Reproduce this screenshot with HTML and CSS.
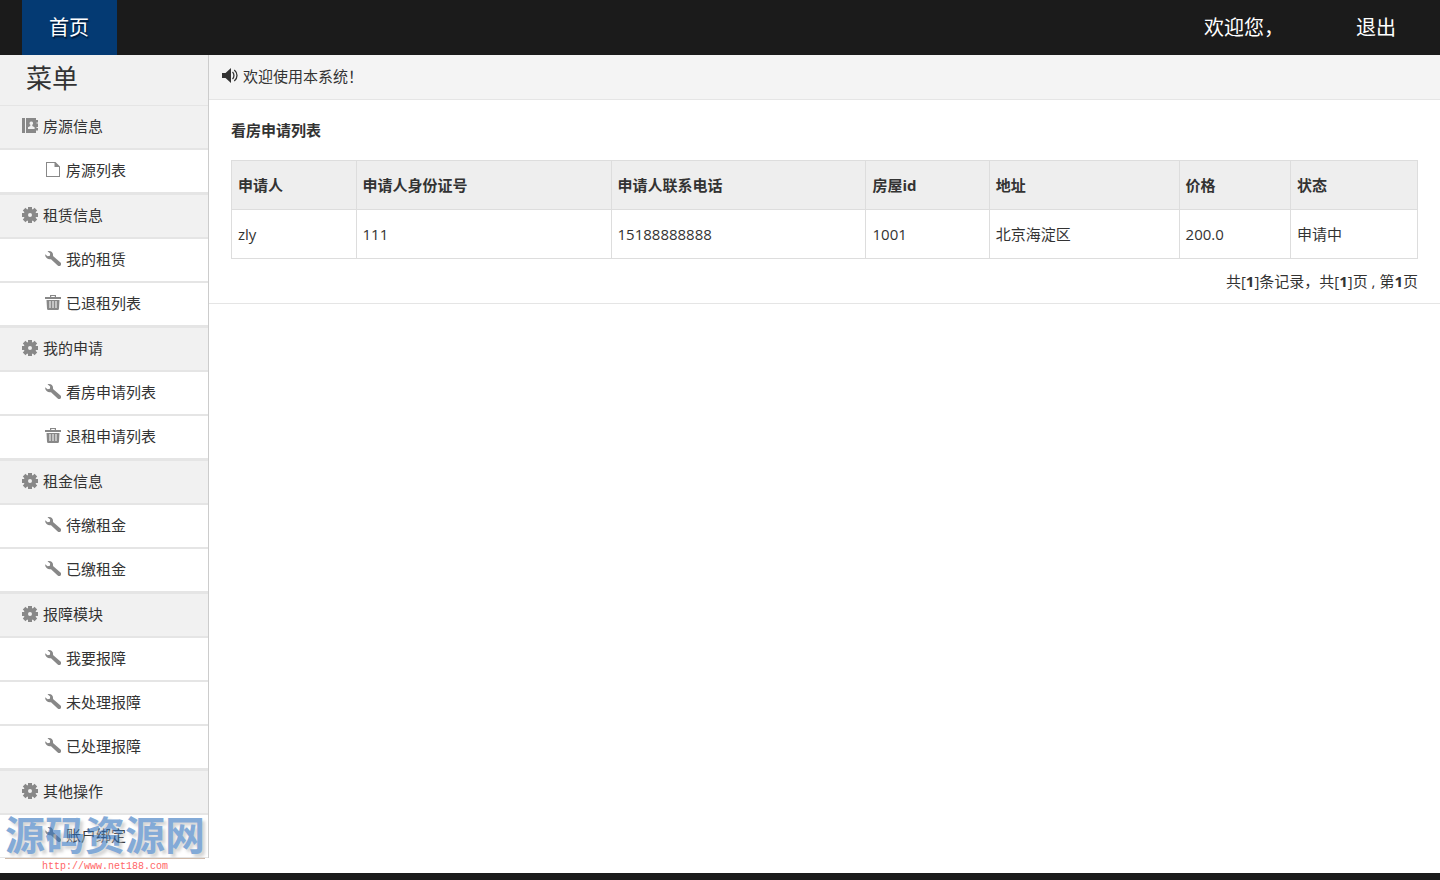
FILE: index.html
```html
<!DOCTYPE html>
<html lang="zh-CN">
<head>
<meta charset="utf-8">
<title>看房申请列表</title>
<link rel="stylesheet" href="styles.css">
</head>
<body>
<svg class="sprite" aria-hidden="true">
  <symbol id="i-gear" viewBox="0 0 16 16"><path fill-rule="evenodd" d="M6 0h4v2l.8.400L12.500.800l2.700 2.700-1.600 1.700.4.800h2v4h-2l-.4.800 1.600 1.700-2.700 2.700-1.700-1.600-.8.400v2H6v-2l-.8-.4-1.700 1.600L.8 12.500l1.600-1.700L2 10H0V6h2l.4-.8L.8 3.500 3.500.8l1.700 1.600L6 2zM8 6a2 2 0 1 0 0 4 2 2 0 0 0 0-4z"/></symbol>
  <symbol id="i-book" viewBox="0 0 16 16"><path fill-rule="evenodd" d="M0 0h3v15H0zM4 0h10v2h2v2.500h-1.500v1H16V9h-1.500v1H16v2.500h-2V15H4zM9.300 3.500A1.800 1.800 0 0 0 8.300 6.800v1.200L6 9.300V11h6.600V9.300L10.300 8V6.800a1.800 1.800 0 0 0-1-3.300z"/></symbol>
  <symbol id="i-file" viewBox="0 0 16 16"><path fill-rule="evenodd" d="M1 0h9.500L15 4.500V15H1zM2 1v13h12V5H9.500V1z"/></symbol>
  <symbol id="i-wrench" viewBox="0 0 16 16"><path d="M2.500.3C5.500-.7 8.600 1.300 8 5l7.500 6.500c1 1 .8 2.100.1 2.900-.7.800-2 .9-2.900 0L6 8.200C3.400 8.900.2 7.200 0 3.300l2.700 2 2.200-.5.300-2.200z"/></symbol>
  <symbol id="i-trash" viewBox="0 0 16 16"><path fill-rule="evenodd" d="M5 0h6v2h5v2H0V2h5zm1.200 1v1h3.600V1zM1.500 5h13l-.5 8.500c-.1 1-.7 1.500-1.500 1.500h-9c-.8 0-1.400-.5-1.500-1.500zM4.500 6v7h1V6zm3 0v7h1V6zm3 0v7h1V6z"/></symbol>
  <symbol id="i-sound" viewBox="0 0 16 16"><path d="M0 5h3.500L9 0v15L3.500 10H0z"/><path d="M10.500 4c1.900 1.800 1.900 5.200 0 7M12.300 2c3.600 3 3.600 8 0 11" fill="none" stroke="currentColor" stroke-width="1.300"/></symbol>
</svg>
<header class="topbar">
  <a class="home" href="#">首页</a>
  <div class="user"><span>欢迎您，</span><a href="#">退出</a></div>
</header>
<div class="layout">
  <nav class="sidebar">
    <h1 class="menu-title">菜单</h1>
    <section class="group">
      <a class="row head" href="#"><svg class="icon"><use href="#i-book"/></svg>房源信息</a>
      <a class="row item" href="#"><svg class="icon"><use href="#i-file"/></svg>房源列表</a>
    </section>
    <section class="group">
      <a class="row head" href="#"><svg class="icon"><use href="#i-gear"/></svg>租赁信息</a>
      <a class="row item" href="#"><svg class="icon"><use href="#i-wrench"/></svg>我的租赁</a>
      <a class="row item" href="#"><svg class="icon"><use href="#i-trash"/></svg>已退租列表</a>
    </section>
    <section class="group">
      <a class="row head" href="#"><svg class="icon"><use href="#i-gear"/></svg>我的申请</a>
      <a class="row item" href="#"><svg class="icon"><use href="#i-wrench"/></svg>看房申请列表</a>
      <a class="row item" href="#"><svg class="icon"><use href="#i-trash"/></svg>退租申请列表</a>
    </section>
    <section class="group">
      <a class="row head" href="#"><svg class="icon"><use href="#i-gear"/></svg>租金信息</a>
      <a class="row item" href="#"><svg class="icon"><use href="#i-wrench"/></svg>待缴租金</a>
      <a class="row item" href="#"><svg class="icon"><use href="#i-wrench"/></svg>已缴租金</a>
    </section>
    <section class="group">
      <a class="row head" href="#"><svg class="icon"><use href="#i-gear"/></svg>报障模块</a>
      <a class="row item" href="#"><svg class="icon"><use href="#i-wrench"/></svg>我要报障</a>
      <a class="row item" href="#"><svg class="icon"><use href="#i-wrench"/></svg>未处理报障</a>
      <a class="row item" href="#"><svg class="icon"><use href="#i-wrench"/></svg>已处理报障</a>
    </section>
    <section class="group">
      <a class="row head" href="#"><svg class="icon"><use href="#i-gear"/></svg>其他操作</a>
      <a class="row item" href="#"><svg class="icon"><use href="#i-wrench"/></svg>账户绑定</a>
    </section>
  </nav>
  <main class="main">
    <p class="notice"><svg class="icon"><use href="#i-sound"/></svg>欢迎使用本系统！</p>
    <div class="content">
      <h2 class="title">看房申请列表</h2>
      <table class="list">
        <colgroup><col class="c-name"><col class="c-wide"><col class="c-wide"><col class="c-house"><col class="c-addr"><col class="c-price"><col class="c-state"></colgroup>
        <thead><tr><th>申请人</th><th>申请人身份证号</th><th>申请人联系电话</th><th>房屋id</th><th>地址</th><th>价格</th><th>状态</th></tr></thead>
        <tbody><tr><td>zly</td><td>111</td><td>15188888888</td><td>1001</td><td>北京海淀区</td><td>200.0</td><td>申请中</td></tr></tbody>
      </table>
      <p class="pager">共[<b>1</b>]条记录，共[<b>1</b>]页 , 第<b>1</b>页</p>
    </div>
  </main>
</div>
<footer class="bottom"></footer>
<div class="watermark"><div class="brand">源码资源网</div><div class="url">http://www.net188.com</div></div>
</body>
</html>
```
FILE: styles.css
```css
* { box-sizing: border-box; }
body {
  margin: 0;
  min-height: 100vh;
  display: flex;
  flex-direction: column;
  position: relative;
  background: #fff;
  color: #333;
  font: 15px/24px "Open Sans", "Noto Sans CJK SC", sans-serif;
}
h1, h2, p { margin: 0; }
a { color: inherit; text-decoration: none; }
.sprite { display: none; }
.icon { width: 16px; height: 16px; flex: none; fill: currentColor; }

.topbar {
  height: 55px;
  padding: 0 44px 0 22px;
  display: flex;
  justify-content: space-between;
  align-items: stretch;
  background: #1b1b1b;
  color: #fff;
  font-size: 20px;
  line-height: 56px;
}
.home { padding: 0 28px 0 27px; background: #043a73; text-shadow: 1px 2px 1px #001a38; }
.user { display: flex; gap: 72px; }

.layout { flex: 1; display: flex; align-items: flex-start; }
.sidebar { width: 209px; flex: none; border-right: 1px solid #ccc; }
.menu-title {
  height: 50px;
  padding-left: 26px;
  background: #f1f1f1;
  font-size: 26px;
  line-height: 46px;
  font-weight: 400;
}
.group { border-top: 1px solid #e5e5e5; }
.menu-title + .group { border-top: 0; }
.row {
  height: 44px;
  padding-bottom: 2px;
  display: flex;
  align-items: center;
  gap: 5px;
  border: solid #e5e5e5;
  border-width: 1px 0;
}
.row .icon { color: #888; }
.head { padding-left: 22px; background: #f1f1f1; }
.item { padding-left: 45px; }

.main { flex: 1; min-width: 0; border-bottom: 1px solid #e5e5e5; }
.notice {
  height: 45px;
  padding: 0 0 2px 13px;
  display: flex;
  align-items: center;
  gap: 5px;
  background: #f4f4f4;
  border-bottom: 1px solid #e5e5e5;
}
.content { padding: 18px 22px 10px; }
.title { margin-bottom: 18px; font-size: 15px; font-weight: 700; }
.list { width: 100%; table-layout: fixed; border-collapse: collapse; }
.list th, .list td {
  height: 49px;
  padding: 0 6px;
  border: 1px solid #ddd;
  text-align: left;
}
.list th { background: #eee; }
.c-name { width: 10.5%; }
.c-wide { width: 21.5%; }
.c-house { width: 10.4%; }
.c-addr { width: 16%; }
.c-price { width: 9.4%; }
.c-state { width: 10.7%; }
.pager { margin-top: 10px; text-align: right; }
.bottom { height: 7px; background: #1b1b1b; }

.watermark { position: absolute; left: 5px; bottom: 6px; width: 200px; text-align: center; pointer-events: none; }
.brand {
  border-bottom: 1px solid #b08c70;
  color: #3273be;
  font-size: 40px;
  font-weight: 700;
  line-height: 46px;
  white-space: nowrap;
  opacity: .6;
  text-shadow: 3px 3px 3px #bbb;
}
.url { color: #f66; font: 10px/15px "Liberation Mono", monospace; }
```
